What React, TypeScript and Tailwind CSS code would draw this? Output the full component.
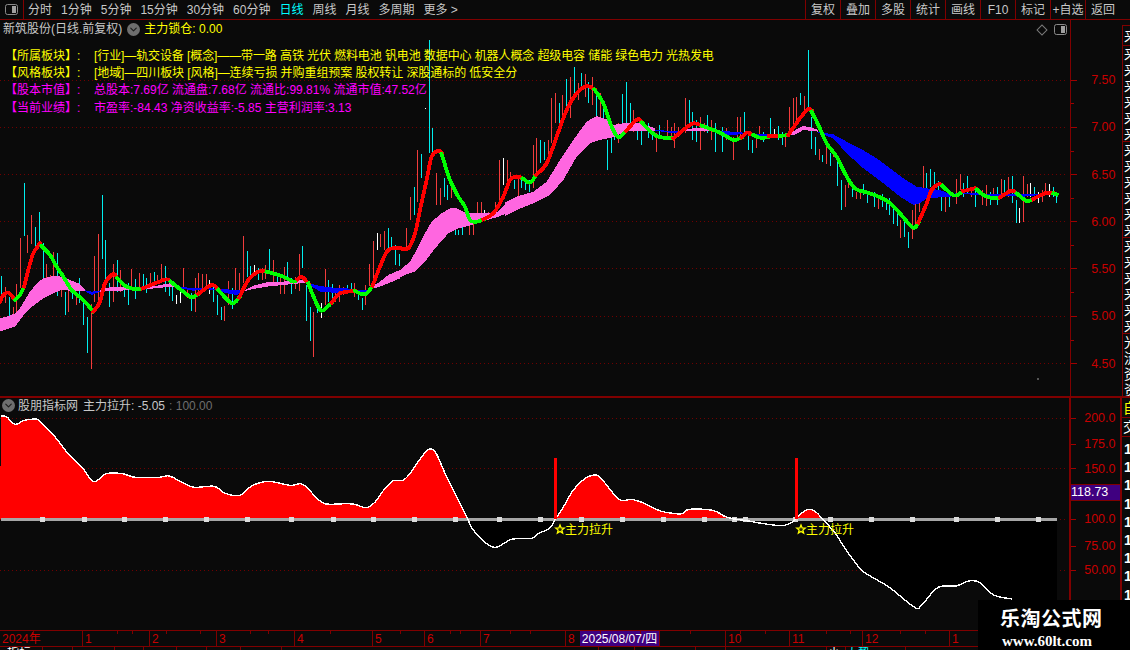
import { ChevronDown } from 'lucide-react';

type Pt = [number, number];
type Bar = [number, number, number, 'r' | 'c' | 'w'];

// traced from the picture, [x, high, low, colour]
const bars: Bar[] = [
  [1,276,300,'c'],[5,287,303,'r'],[9,297,316,'c'],[13,307,315,'r'],[16,284,312,'r'],[20,238,288,'r'],[24,183,236,'c'],[27,235,253,'r'],
  [31,215,244,'r'],[35,227,247,'c'],[39,212,242,'c'],[43,243,280,'c'],[46,264,278,'r'],[50,275,283,'r'],[53,252,277,'r'],[57,253,296,'c'],
  [61,280,297,'r'],[65,292,315,'c'],[68,290,312,'r'],[72,290,299,'c'],[76,293,305,'r'],[79,278,303,'c'],[83,298,325,'c'],[87,317,353,'c'],
  [91,304,369,'r'],[94,256,302,'r'],[98,234,306,'r'],[102,195,259,'c'],[105,240,283,'c'],[109,283,307,'c'],[113,264,302,'r'],[117,260,292,'c'],
  [120,270,292,'r'],[124,283,297,'c'],[128,283,305,'c'],[131,269,290,'r'],[135,279,299,'c'],[139,273,290,'r'],[143,274,290,'c'],[146,278,293,'c'],
  [150,273,287,'r'],[154,272,283,'c'],[157,275,283,'r'],[161,264,280,'r'],[165,266,292,'c'],[169,280,296,'c'],[172,287,301,'c'],[176,295,304,'w'],
  [180,292,303,'w'],[183,268,290,'r'],[187,290,298,'r'],[191,293,311,'c'],[195,278,312,'r'],[198,273,295,'r'],[202,274,290,'r'],[206,274,287,'r'],
  [209,280,294,'w'],[213,283,302,'c'],[217,295,315,'c'],[221,307,320,'c'],[224,306,321,'r'],[228,281,305,'r'],[232,288,309,'c'],[235,268,293,'r'],
  [239,273,293,'r'],[243,236,283,'r'],[247,251,277,'c'],[250,266,275,'c'],[254,265,273,'w'],[258,268,280,'c'],[262,268,280,'r'],[265,265,279,'r'],
  [269,249,273,'c'],[273,260,283,'r'],[277,273,283,'c'],[280,278,294,'r'],[284,267,294,'r'],[287,262,280,'c'],[291,278,294,'c'],[295,277,289,'r'],
  [299,254,291,'r'],[302,246,268,'c'],[306,285,321,'c'],[310,307,341,'c'],[313,312,357,'r'],[317,302,313,'c'],[321,303,318,'w'],[325,269,305,'r'],
  [328,280,302,'c'],[332,284,305,'c'],[335,288,302,'r'],[339,285,302,'r'],[343,287,295,'r'],[347,285,292,'c'],[351,283,292,'c'],[354,283,297,'r'],
  [358,292,300,'c'],[362,298,310,'c'],[365,285,305,'r'],[369,264,286,'r'],[373,241,286,'r'],[377,233,250,'w'],[380,234,247,'r'],[384,231,250,'r'],
  [388,228,248,'c'],[391,237,250,'c'],[395,245,265,'c'],[399,254,266,'c'],[406,228,248,'r'],[410,197,220,'r'],[414,187,215,'c'],[417,150,202,'r'],
  [421,154,178,'c'],[429,40,153,'c'],[432,128,154,'c'],[436,173,205,'r'],[440,188,205,'r'],[444,178,197,'c'],[447,185,200,'c'],[451,185,198,'r'],
  [455,230,235,'c'],[458,230,235,'c'],[462,223,235,'c'],[469,225,235,'r'],[473,223,235,'r'],[477,202,220,'r'],[481,202,217,'r'],[484,210,218,'w'],
  [488,212,217,'r'],[495,202,210,'r'],[499,160,208,'r'],[503,158,185,'w'],[507,160,182,'r'],[510,172,182,'r'],[514,180,189,'c'],[518,177,197,'r'],
  [521,178,188,'c'],[525,178,190,'c'],[529,180,192,'c'],[533,145,188,'r'],[536,138,175,'r'],[540,140,163,'c'],[544,142,160,'c'],[548,140,157,'r'],
  [551,98,143,'r'],[555,93,123,'r'],[559,103,123,'c'],[562,95,115,'r'],[566,79,107,'c'],[570,77,118,'r'],[574,67,100,'c'],[578,83,100,'r'],
  [581,73,88,'c'],[585,74,97,'r'],[588,82,103,'c'],[592,77,105,'r'],[596,90,117,'c'],[600,93,117,'r'],[603,107,130,'c'],[607,140,170,'c'],
  [611,138,153,'c'],[614,125,140,'c'],[618,123,143,'r'],[622,94,136,'c'],[626,82,123,'c'],[630,103,128,'c'],[633,110,132,'r'],[637,127,140,'c'],
  [641,130,145,'c'],[648,123,138,'c'],[652,130,140,'c'],[656,133,152,'r'],[659,125,137,'c'],[667,120,140,'r'],[671,127,140,'r'],[674,123,148,'r'],
  [678,127,137,'r'],[685,98,133,'r'],[689,100,125,'c'],[692,112,140,'c'],[696,120,142,'c'],[700,117,150,'r'],[704,123,132,'r'],[707,115,133,'c'],
  [711,120,140,'r'],[715,123,152,'c'],[722,127,152,'c'],[726,128,140,'r'],[733,137,160,'r'],[737,117,138,'r'],[740,117,137,'r'],[744,112,135,'c'],
  [748,135,150,'c'],[752,140,153,'c'],[756,135,148,'r'],[759,126,135,'r'],[763,132,142,'c'],[770,118,135,'c'],[774,129,135,'w'],[778,126,140,'c'],
  [782,132,145,'c'],[785,135,147,'r'],[789,107,135,'r'],[793,98,127,'r'],[796,97,120,'r'],[800,93,105,'c'],[804,96,112,'r'],[808,50,108,'c'],
  [811,117,149,'c'],[815,137,155,'c'],[819,149,160,'r'],[822,155,162,'c'],[826,147,164,'r'],[830,153,166,'c'],[833,150,157,'r'],[837,161,186,'c'],
  [841,180,210,'c'],[845,185,207,'r'],[848,180,188,'r'],[852,183,197,'c'],[856,192,199,'r'],[860,192,199,'r'],[863,184,195,'c'],[867,193,203,'c'],
  [874,192,207,'c'],[878,198,209,'r'],[882,194,207,'c'],[886,202,210,'c'],[889,198,215,'c'],[893,207,224,'c'],[897,213,226,'c'],[900,220,238,'r'],
  [904,222,237,'c'],[908,232,248,'c'],[912,210,239,'r'],[915,203,228,'r'],[919,188,212,'r'],[923,166,197,'r'],[926,173,188,'c'],[930,169,187,'c'],
  [934,172,188,'c'],[938,181,190,'c'],[941,197,211,'c'],[945,195,212,'r'],[949,197,207,'c'],[956,179,204,'r'],[960,174,190,'r'],[963,183,197,'c'],
  [967,176,194,'c'],[971,187,197,'r'],[975,190,207,'c'],[982,190,205,'r'],[986,185,206,'r'],[990,192,205,'c'],[993,188,198,'r'],[997,187,205,'c'],
  [1001,179,195,'r'],[1004,180,193,'c'],[1008,177,197,'r'],[1012,176,203,'c'],[1016,200,223,'c'],[1019,208,223,'w'],[1023,176,222,'r'],[1027,184,197,'r'],
  [1030,183,197,'w'],[1034,187,200,'c'],[1038,192,203,'w'],[1042,190,202,'r'],[1045,183,195,'r'],[1049,184,197,'w'],[1053,187,197,'c'],[1056,193,203,'c'],
];

const barColor = { r: '#f23c3c', c: '#00eeee', w: '#ffffff' };

// crop helpers: the traces were read off 3x crops of the picture
const z3 = (p: Pt[]): Pt[] => p.map(([x, y]) => [x / 3, y / 3 + 120]);
const z4 = (p: Pt[]): Pt[] => p.map(([x, y]) => [x / 3 + 400, y / 3 + 60]);
const z5 = (p: Pt[]): Pt[] => p.map(([x, y]) => [x / 3 + 750, y / 3 + 40]);
const z12 = (p: Pt[]): Pt[] => p.map(([x, y]) => [x / 3 + 385, y / 3 + 190]);
const z6 = (p: Pt[]): Pt[] => p.map(([x, y]) => [x / 2.775, y / 3 + 395]);
const z7 = (p: Pt[]): Pt[] => p.map(([x, y]) => [x / 2.775 + 565, y / 3 + 395]);

const RED = '#ff0000';
const GREEN = '#00ff00';
const PINK = '#ff66e0';
const BLUE = '#0000ff';

const ma: [string, Pt[]][] = [
  [RED, z3([[0,545],[10,525],[25,518],[45,540]])],
  [GREEN, z3([[45,540],[60,525],[72,500]])],
  [RED, z3([[72,500],[85,450],[100,400],[120,370]])],
  [GREEN, z3([[125,378],[150,405],[170,440],[190,470],[215,510],[250,540],[280,575]])],
  [RED, z3([[280,575],[300,545],[315,490],[340,462],[352,475]])],
  [GREEN, z3([[352,475],[375,497],[405,508],[428,505]])],
  [RED, z3([[428,505],[470,488],[500,478],[512,485]])],
  [GREEN, z3([[512,485],[550,515],[575,532],[595,522]])],
  [RED, z3([[595,522],[635,495],[655,510]])],
  [GREEN, z3([[655,510],[695,550],[718,532]])],
  [RED, z3([[718,532],[745,480],[775,455],[800,455]])],
  [GREEN, z3([[800,455],[850,470],[880,485],[893,478]])],
  [RED, z3([[893,478],[905,470],[925,490]])],
  [GREEN, z3([[925,490],[945,540],[965,572],[995,548]])],
  [RED, z3([[995,548],[1020,520],[1065,513]])],
  [GREEN, z3([[1065,513],[1095,523],[1118,497]])],
  [RED, z3([[1118,497],[1140,440],[1165,390],[1200,385]])],
  [RED, z4([[0,565],[25,565],[45,520],[60,450],[80,360],[95,290],[115,272],[125,280]])],
  [GREEN, z4([[125,282],[150,360],[175,410],[195,440],[210,480],[230,485],[250,478]])],
  [RED, z4([[250,478],[280,460],[310,410],[330,360],[350,350],[368,355]])],
  [GREEN, z4([[368,355],[390,368],[408,345]])],
  [RED, z4([[408,345],[440,310],[470,230],[500,150],[530,100],[560,78],[583,88]])],
  [GREEN, z4([[583,88],[610,130],[635,200],[655,232],[678,213]])],
  [RED, z4([[678,213],[712,178],[725,187]])],
  [GREEN, z4([[725,187],[770,228],[820,235]])],
  [RED, z4([[820,235],[850,210],[880,190],[905,197]])],
  [GREEN, z4([[905,197],[960,218],[1000,240],[1025,232]])],
  [RED, z4([[1025,232],[1040,218],[1050,220]])],
  [RED, z5([[0,282],[10,285]])],
  [GREEN, z5([[10,285],[30,293],[55,292]])],
  [RED, z5([[58,288],[90,288]])],
  [GREEN, z5([[90,288],[115,285]])],
  [RED, z5([[115,285],[150,235],[175,207],[185,212]])],
  [GREEN, z5([[185,215],[205,255],[230,310],[260,350],[285,400],[315,445],[360,460],[410,482],[445,515],[488,562],[505,548]])],
  [RED, z5([[505,548],[530,490],[545,450],[567,432],[578,438]])],
  [GREEN, z5([[578,438],[590,450],[615,467],[640,453]])],
  [RED, z5([[640,453],[675,445],[680,448]])],
  [GREEN, z5([[680,448],[700,465],[730,475],[750,472]])],
  [RED, z5([[750,472],[785,452],[800,460]])],
  [GREEN, z5([[800,460],[830,483],[850,477]])],
  [RED, z5([[850,477],[885,460],[910,460]])],
  [GREEN, z5([[910,460],[920,463]])],
];

const band: [string, Pt[], Pt[]][] = [
  [PINK, z3([[0,595],[20,590],[45,580],[60,565],[75,540],[90,515],[110,490],[130,475],[160,468],[185,470],[210,480],[235,490],[255,510]]),
    z3([[0,635],[20,628],[45,620],[60,600],[75,580],[90,565],[110,550],[130,535],[160,520],[185,510],[210,512],[235,513],[255,512]])],
  [BLUE, z3([[255,511],[275,515],[300,512]]), z3([[255,513],[275,525],[300,515]])],
  [PINK, z3([[300,512],[320,503],[360,500],[400,503],[430,503],[470,497],[510,490],[540,500]]),
    z3([[300,515],[320,514],[360,512],[400,510],[430,507],[470,505],[510,500],[540,503]])],
  [BLUE, z3([[540,502],[580,503],[620,503],[650,507],[680,508],[710,510],[730,511]]),
    z3([[540,505],[580,512],[620,508],[650,510],[680,520],[710,525],[730,514]])],
  [PINK, z3([[730,513],[760,497],[800,487],[850,485],[900,478],[922,486]]),
    z3([[730,514],[760,507],[800,500],[850,495],[900,490],[922,490]])],
  [BLUE, z3([[922,488],[960,498],[1000,503],[1040,505],[1080,510],[1108,512]]),
    z3([[922,491],[960,515],[1000,518],[1040,518],[1080,515],[1108,518]])],
  [PINK, z3([[1108,505],[1140,485],[1165,465],[1200,450]]), z3([[1108,508],[1140,500],[1165,490],[1200,475]])],
  [PINK, z12([[45,240],[75,215],[100,170],[120,130],[140,95],[170,70],[195,55],[215,55],[240,68],[280,68],[310,70],[340,65],[360,42]]),
    z12([[45,262],[60,255],[90,245],[120,215],[150,175],[190,130],[220,115],[260,105],[300,92],[340,80],[360,72]])],
  [PINK, z4([[315,428],[350,410],[400,395],[440,365],[480,300],[520,240],[560,185],[590,168],[620,178],[640,195],[670,190],[720,190],[765,205]]),
    z4([[315,468],[350,450],[400,430],[450,405],[490,360],[530,290],[570,250],[600,240],[640,232],[680,212],[720,213],[765,212]])],
  [BLUE, z4([[765,210],[820,213],[850,212]]), z4([[765,212],[820,220],[850,213]])],
  [PINK, z4([[855,210],[880,205],[900,203],[930,207]]), z4([[855,212],[880,212],[900,212],[930,212]])],
  [BLUE, z4([[930,210],[960,213],[1000,215],[1030,218]]), z4([[930,212],[960,222],[1000,225],[1030,222]])],
  [BLUE, z5([[0,283],[60,283],[115,285]]), z5([[0,286],[60,290],[115,288]])],
  [PINK, z5([[115,285],[140,268],[160,258],[180,262],[205,270]]), z5([[115,288],[140,282],[160,270],[180,272],[205,275]])],
  [BLUE, z5([[205,276],[250,283],[290,305],[330,325],[380,355],[420,385],[460,415],[500,440],[530,445],[570,450],[600,462],[640,458],[680,460],[740,463],[820,463],[880,461]]),
    z5([[205,278],[250,295],[290,340],[340,385],[400,430],[450,470],[490,495],[510,490],[530,475],[570,472],[600,470],[640,462],[680,465],[740,468],[820,470],[880,464]])],
];

const curve: Pt[] = [
  ...z6([[3,63],[18,65],[42,88],[65,77],[85,73],[105,74],[130,100],[160,135],[190,178],[230,220],[260,260],[295,236],[340,236],[375,247],[440,247],[470,243],[510,265],[540,277],[595,274],[625,295],[665,301],[700,272],[745,259],[805,271],[840,268],[880,310],[905,327],[960,326],[985,328],[1015,338],[1040,322],[1065,285],[1090,258],[1120,255],[1145,225],[1160,200],[1190,163],[1210,175],[1235,235],[1265,300],[1295,365],[1310,400],[1340,437],[1375,457],[1420,433],[1475,430],[1495,415],[1525,400],[1540,375]]),
  ...z7([[0,328],[20,290],[50,255],[80,240],[100,250],[150,313],[185,313],[220,325],[265,348],[300,355],[325,356],[345,343],[410,346],[445,365],[470,372],[510,378],[545,385],[600,392],[625,385],[640,372],[650,360],[675,343],[695,350],[720,378],[750,415],[780,465],[820,522],[850,545],[900,577],[970,637],[990,630],[1035,577],[1085,573],[1120,558],[1150,562],[1190,600],[1240,612]]),
];

// catmull-rom through the points so the traces don't look like polygons
function smooth(p: Pt[]) {
  let d = `M${p[0][0]},${p[0][1]}`;
  for (let i = 0; i < p.length - 1; i++) {
    const a = p[Math.max(i - 1, 0)];
    const b = p[i];
    const c = p[i + 1];
    const e = p[Math.min(i + 2, p.length - 1)];
    d += `C${b[0] + (c[0] - a[0]) / 6},${b[1] + (c[1] - a[1]) / 6} ${c[0] - (e[0] - b[0]) / 6},${c[1] - (e[1] - b[1]) / 6} ${c[0]},${c[1]}`;
  }
  return d;
}

const poly = (p: Pt[]) => p.map((q) => q.join(',')).join(' ');

const menu = ['分时', '1分钟', '5分钟', '15分钟', '30分钟', '60分钟', '日线', '周线', '月线', '多周期'];
const actions = ['复权', '叠加', '多股', '统计', '画线', 'F10', '标记', '+自选', '返回'];

const mainGrid = [
  { y: 80, label: '7.50' },
  { y: 127, label: '7.00' },
  { y: 174.5, label: '6.50' },
  { y: 221.5, label: '6.00' },
  { y: 268.5, label: '5.50' },
  { y: 316, label: '5.00' },
  { y: 363.5, label: '4.50' },
];
const subGrid = [
  { y: 418, label: '200.0' },
  { y: 468.5, label: '150.0' },
  { y: 519, label: '100.0' },
  { y: 570, label: '50.00' },
];
const subLabels = [
  { y: 418, label: '200.0' },
  { y: 444, label: '175.0' },
  { y: 468.5, label: '150.0' },
  { y: 519, label: '100.0' },
  { y: 546, label: '75.00' },
  { y: 570, label: '50.00' },
];

const dashes = [42, 84, 124, 165, 206, 247, 291, 333, 373, 414, 455, 499, 540, 581, 622, 663, 704, 734, 745, 795, 830, 871, 912, 956, 997, 1038];

const dates = [
  { w: 'w-[82px]', t: '2024年' },
  { w: 'w-[67px]', t: '1' },
  { w: 'w-[67px]', t: '2' },
  { w: 'w-[78px]', t: '3' },
  { w: 'w-[78px]', t: '4' },
  { w: 'w-[52px]', t: '5' },
  { w: 'w-[56px]', t: '6' },
  { w: 'w-[85px]', t: '7' },
  { w: 'w-[15px]', t: '8' },
];
const dates2 = [
  { w: 'w-[64px]', t: '10' },
  { w: 'w-[73px]', t: '11' },
  { w: 'w-[87px]', t: '12' },
  { w: 'w-[100px]', t: '1' },
];
const dateTicks = [33, 117, 132, 166, 200, 250, 268, 330, 372, 400, 450, 460, 510, 530, 600, 640, 690, 740, 765, 826, 850, 900, 925];

const tabs = [
  { w: 'w-[43px]', t: '指标', c: 'text-white pl-[7px]' },
  { w: 'w-[30px]', t: '一', c: 'text-white pl-[7px]' },
  { w: 'w-[42px]', t: '', c: '' },
  { w: 'w-[29px]', t: '', c: '' },
  { w: 'w-[33px]', t: '', c: '' },
  { w: 'w-[30px]', t: '', c: '' },
  { w: 'w-[34px]', t: '', c: '' },
  { w: 'w-[41px]', t: '', c: '' },
  { w: 'w-[317px]', t: '', c: '' },
  { w: 'w-[36px]', t: '', c: '' },
  { w: 'w-[61px]', t: '', c: '' },
  { w: 'w-[30px]', t: '', c: '' },
  { w: 'w-[101px]', t: '', c: '' },
  { w: 'w-[19px]', t: '小', c: 'text-white pl-[1px]' },
  { w: 'w-[60px]', t: '大势', c: 'text-[#00ffff]' },
];

const railMain = ['来', '来', '来', '来', '来', '来', '来', '来', '来', '来', '来', '来', '来', '来', '来', '来', '来', '来', '光', '流', '资', '资', '外', '扶'];
const railSub = ['1', '1', '1', '1', '1', '1', '1', '1', '1', '1'];

function PanelIcon() {
  return (
    <svg width="13" height="11" viewBox="0 0 13 11">
      <rect x="0.5" y="0.5" width="12" height="10" rx="2" fill="none" stroke="#8a8a8a" />
      <rect x="7" y="2" width="4" height="7" fill="#a0a0a0" />
    </svg>
  );
}

function CircleMenu() {
  return (
    <span className="w-[13px] h-[13px] rounded-full bg-[#6e6e6e] flex items-center justify-center shrink-0">
      <ChevronDown size={11} strokeWidth={2.5} className="text-[#1c1c1c]" />
    </span>
  );
}

function Legend({ label, text, color, tight }: { label: string; text: string; color: string; tight?: string }) {
  return (
    <div className={`flex h-[17.4px] items-center whitespace-nowrap ${color}`}>
      <span className="w-[93px] pl-[4px] shrink-0">{label}</span>
      <span className={tight}>{text}</span>
    </div>
  );
}

function Star({ x, y }: { x: number; y: number }) {
  const pts: Pt[] = [];
  for (let i = 0; i < 10; i++) {
    const r = i % 2 ? 2 : 4.5;
    const a = -Math.PI / 2 + (i * Math.PI) / 5;
    pts.push([x + r * Math.cos(a), y + r * Math.sin(a)]);
  }
  return <polygon points={poly(pts)} fill="#2a2a00" stroke="#ffff00" strokeWidth="1.3" />;
}

function Axis({ top, height, items, minor, heavy }: { top: number; height: number; items: { y: number; label: string }[]; minor: number[]; heavy?: boolean }) {
  return (
    <svg width="51" height={height} viewBox={`1071 ${top} 51 ${height}`} className="block">
      {items.map((g) => (
        <g key={g.label}>
          <rect x="1071" y={Math.floor(g.y)} width={heavy ? 5 : 6} height="1" fill="#a00000" />
          <text x="1115.5" y={g.y + 4} textAnchor="end" fontSize="12.5" fill="#c80000">
            {g.label}
          </text>
        </g>
      ))}
      {minor.map((y) => (
        <rect key={y} x="1071" y={y} width="3" height="1" fill="#a00000" />
      ))}
    </svg>
  );
}

export default function App() {
  const fillPath = `${smooth(curve)}L1012,600L1057,601L1057,519L0,519L1,416Z`;

  return (
    <div className="relative w-[1130px] h-[650px] overflow-hidden bg-[#0a0a0a] text-[12px] leading-none text-[#c8c8c8] [font-family:'Liberation_Sans','Noto_Sans_CJK_SC',sans-serif]">
      {/* top bar */}
      <div className="flex h-[20px] items-stretch border-b border-[#800000]">
        <div className="flex w-[24px] items-center justify-center border-r border-[#800000]">
          <PanelIcon />
        </div>
        <div className="flex items-center gap-[9px] pl-[4px]">
          {menu.map((m) => (
            <span key={m} className={m === '日线' ? 'text-[#00ffff]' : ''}>
              {m}
            </span>
          ))}
          <span>更多 &gt;</span>
        </div>
        <div className="ml-auto flex pr-[10px]">
          {actions.map((a) => (
            <span key={a} className="flex w-[35px] items-center justify-center border-l border-[#800000] whitespace-nowrap">
              {a}
            </span>
          ))}
        </div>
      </div>

      {/* price panel */}
      <div className="flex h-[378px] border-b-2 border-[#800000]">
        <div className="relative w-[1071px] border-r border-[#800000]">
          <svg width="1070" height="376" viewBox="0 20 1070 376" className="block">
            {mainGrid.map((g) => (
              <line key={g.y} x1="0" x2="1068" y1={g.y} y2={g.y} stroke="#700000" strokeDasharray="1 3" shapeRendering="crispEdges" />
            ))}
            {bars.map(([x, a, b, c], i) => (
              <rect key={i} x={x} y={a} width="1" height={b - a} fill={barColor[c]} shapeRendering="crispEdges" />
            ))}
            {band.map(([c, up, low], i) => (
              <polygon key={i} points={poly([...up, ...[...low].reverse()])} fill={c} shapeRendering="crispEdges" />
            ))}
            {ma.map(([c, p], i) => (
              <path key={i} d={smooth(p)} fill="none" stroke={c} strokeWidth="3.8" strokeLinecap="square" shapeRendering="crispEdges" />
            ))}
            <rect x="425" y="108" width="1" height="1" fill="#fff" />
            <rect x="1037" y="378" width="2" height="2" fill="#555" />
          </svg>

          {/* legend lies over the chart */}
          <div className="absolute inset-0">
            <div className="flex h-[18px] items-center gap-[5px] pl-[3px]">
              <span>新筑股份(日线.前复权)</span>
              <CircleMenu />
              <span className="-ml-px text-[#ffff00]">主力锁仓: 0.00</span>
            </div>
            <div className="pt-[9px] pl-px">
              <Legend color="text-[#ffff00]" tight="tracking-[-0.1px]" label="【所属板块】:" text="[行业]—轨交设备 [概念]——带一路 高铁 光伏 燃料电池 钒电池 数据中心 机器人概念 超级电容 储能 绿色电力 光热发电" />
              <Legend color="text-[#ffff00]" tight="tracking-[-0.07px]" label="【风格板块】:" text="[地域]—四川板块 [风格]—连续亏损 并购重组预案 股权转让 深股通标的 低安全分" />
              <Legend color="text-[#ff00ff]" label="【股本市值】:" text="总股本:7.69亿 流通盘:7.68亿 流通比:99.81% 流通市值:47.52亿" />
              <Legend color="text-[#ff00ff]" label="【当前业绩】:" text="市盈率:-84.43 净资收益率:-5.85 主营利润率:3.13" />
            </div>
          </div>
          <div className="absolute right-[3px] top-[4px] flex items-center gap-[8px]">
            <span className="h-[8px] w-[8px] rotate-45 border border-[#7a7a7a]" />
            <PanelIcon />
          </div>
        </div>
        <div className="w-[51px]">
          <Axis top={20} height={376} items={mainGrid} minor={[103, 151, 198, 245, 292, 340]} />
        </div>
        <div className="mt-[5px] w-[8px] overflow-hidden border-l border-t border-[#800000] text-[14px] text-white">
          <div className="flex h-[20px] items-center border-b border-[#800000] pl-px">来</div>
          <div className="grid grid-cols-1">
            {railMain.map((r, i) => (
              <div key={i} className={`flex h-[16px] items-center pl-px ${i % 6 === 5 ? 'border-b border-[#800000]' : ''}`}>
                {r}
              </div>
            ))}
          </div>
        </div>
      </div>

      {/* indicator panel */}
      <div className="flex h-[232px]">
        <div className="relative w-[1071px] border-r-2 border-[#800000]">
          <svg width="1069" height="232" viewBox="0 398 1069 232" className="block">
            <defs>
              <clipPath id="above">
                <rect x="0" y="397" width="1070" height="122" />
              </clipPath>
              <clipPath id="below">
                <rect x="0" y="519" width="1070" height="111" />
              </clipPath>
            </defs>
            {subGrid.map((g) => (
              <line key={g.y} x1="0" x2="1068" y1={g.y} y2={g.y} stroke="#700000" strokeDasharray="1 3" shapeRendering="crispEdges" />
            ))}
            <path d={fillPath} fill="#ff0000" clipPath="url(#above)" shapeRendering="crispEdges" />
            <path d={fillPath} fill="#000000" clipPath="url(#below)" shapeRendering="crispEdges" />
            <rect x="1" y="518" width="1056" height="3" fill="#a6a6a6" />
            {dashes.map((x) => (
              <rect key={x} x={x - 2} y="517" width="5" height="5" fill="#dddddd" />
            ))}
            <path d={smooth(curve)} fill="none" stroke="#ffffff" strokeWidth="1.4" shapeRendering="crispEdges" />
            <rect x="554" y="458" width="3" height="61" fill="#ff0000" />
            <rect x="795" y="458" width="3" height="61" fill="#ff0000" />
            <Star x={560} y={529.5} />
            <Star x={801} y={529.5} />
            <text x="565" y="534" fontSize="12" fill="#ffff00">主力拉升</text>
            <text x="806" y="534" fontSize="12" fill="#ffff00">主力拉升</text>
          </svg>
          <div className="absolute left-[2px] top-0 flex h-[15px] items-center whitespace-nowrap">
            <CircleMenu />
            <span className="ml-[3px]">股朋指标网</span>
            <span className="ml-[5px]">主力拉升: -5.05</span>
            <span className="ml-[4px] text-[#6e6e6e]">: 100.00</span>
          </div>
        </div>
        <div className="relative w-[49px]">
          <Axis top={398} height={232} items={subLabels} minor={[] as number[]} heavy />
          <div className="absolute left-0 top-[86px] flex h-[17px] w-[49px] items-center border-y border-[#800000] bg-[#3f0080] text-[12.5px] text-white">
            118.73
          </div>
        </div>
        <div className="w-[10px] overflow-hidden border-l-2 border-[#800000]">
          <div className="flex h-[20px] items-center border-b border-[#800000] pl-[1px] text-[14px] text-[#ffff00]">自</div>
          <div className="flex h-[19px] items-center border-b border-[#800000] pl-[1px] text-[14px] text-white">交</div>
          <div className="flex flex-col pt-[3px]">
            {railSub.map((r, i) => (
              <div key={i} className="flex h-[18.2px] items-center pl-[2px] text-[14px] font-bold text-white">
                {r}
              </div>
            ))}
          </div>
        </div>
      </div>

      {/* date axis */}
      <div className="relative flex h-[17px] border-y border-[#800000] text-[#c80000]">
        {dates.map((d, i) => (
          <div key={i} className={`${d.w} flex items-center pl-[2px] ${i ? 'border-l border-[#800000]' : ''}`}>
            {d.t}
          </div>
        ))}
        <div className="flex w-[79px] items-center justify-center bg-[#3f0080] text-white">2025/08/07/四</div>
        <div className="w-[66px] border-l border-[#800000]" />
        {dates2.map((d, i) => (
          <div key={i} className={`${d.w} flex items-center border-l border-[#800000] pl-[2px]`}>
            {d.t}
          </div>
        ))}
        {dateTicks.map((x) => (
          <span key={x} className="absolute top-0 h-[3px] w-px bg-[#800000]" style={{ left: x }} />
        ))}
      </div>

      {/* tab strip, only its top edge is inside the window */}
      <div className="flex h-[3px] overflow-hidden">
        {tabs.map((t, i) => (
          <div key={i} className={`${t.w} h-[16px] border-r border-[#800000] ${t.c}`}>
            {t.t}
          </div>
        ))}
      </div>

      {/* watermark */}
      <div className="absolute bottom-0 right-0 flex h-[50px] w-[152px] flex-col bg-black pl-[22px] pt-[9px] text-white">
        <span className="text-[20px] font-bold tracking-[0.5px]">乐淘公式网</span>
        <span className="mt-[5px] pl-[2px] text-[15px] font-bold [font-family:'Liberation_Serif',serif]">www.60lt.com</span>
      </div>
    </div>
  );
}
